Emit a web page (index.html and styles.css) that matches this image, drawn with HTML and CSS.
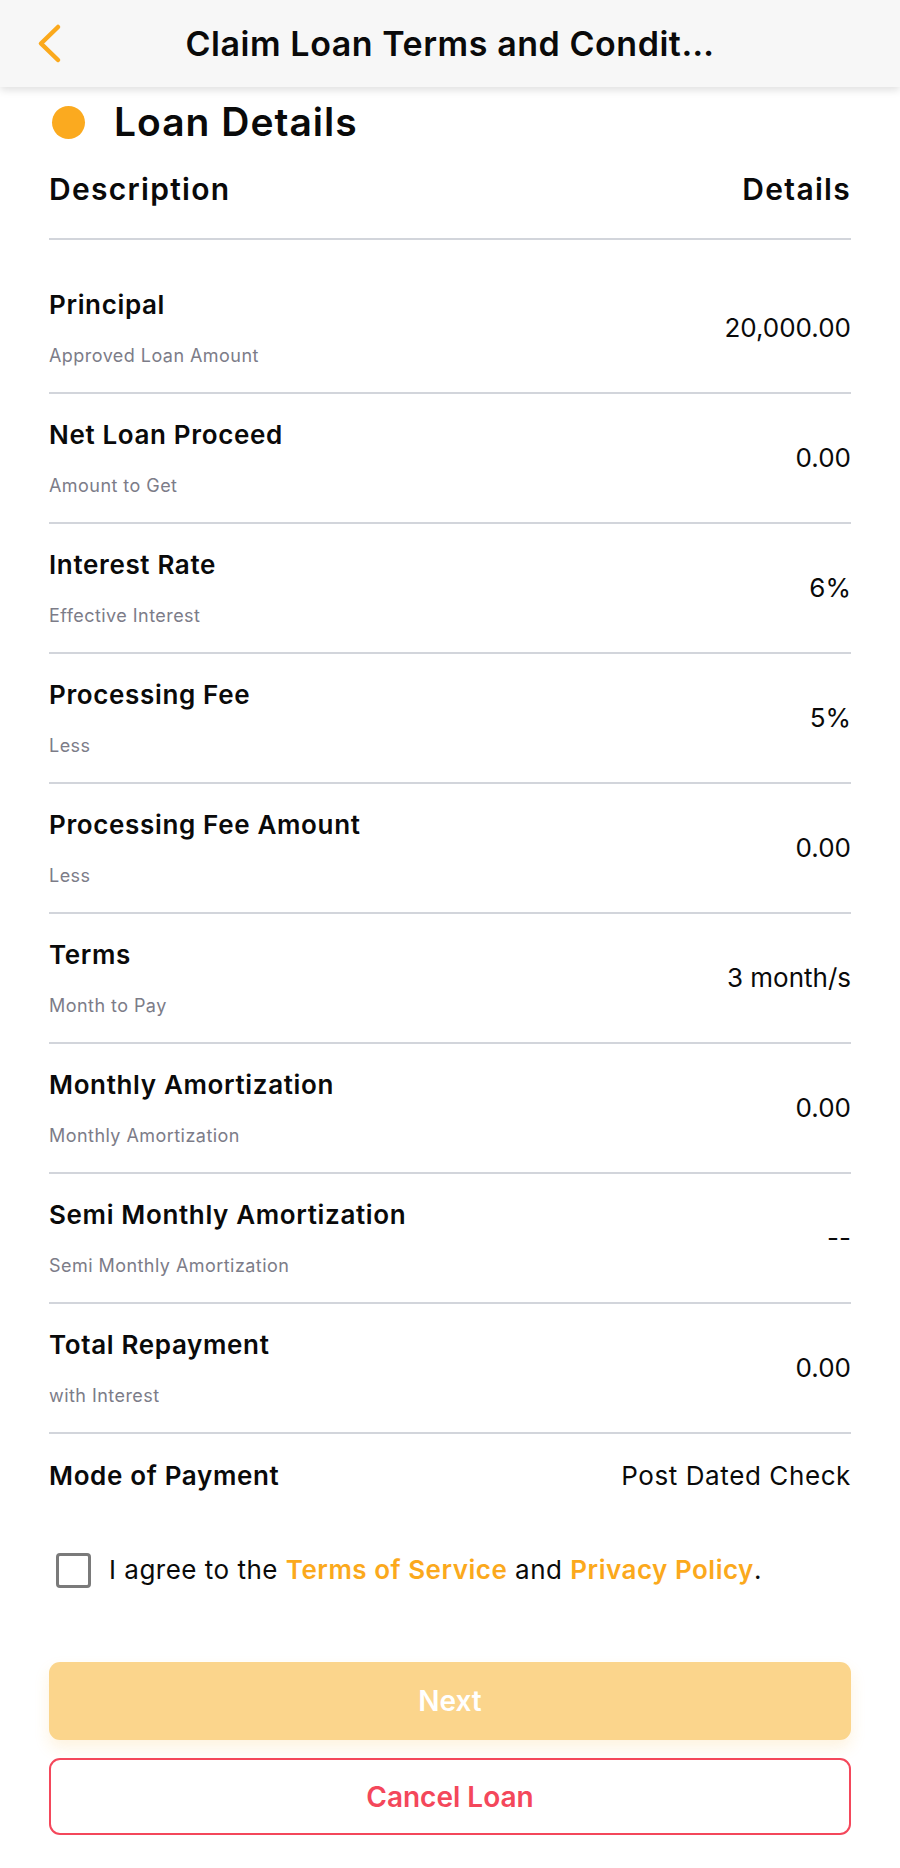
FILE: index.html
```html
<!DOCTYPE html>
<html lang="en">
<head>
<meta charset="utf-8">
<title>Claim Loan Terms and Conditions</title>
<link rel="stylesheet" href="styles.css">
</head>
<body>
<header class="topbar">
  <div class="topbar-left">
    <svg class="back" width="48" height="87" viewBox="0 0 48 87" aria-hidden="true">
      <path d="M38 27 L21 43.5 L38 60" fill="none" stroke="#FBA91C" stroke-width="4.5" stroke-linecap="round" stroke-linejoin="round"/>
    </svg>
  </div>
  <h1 class="topbar-title">Claim Loan Terms and Condit…</h1>
  <div class="topbar-right"></div>
</header>

<main class="content">
  <div class="section-head">
    <span class="dot"></span>
    <h2 class="section-title">Loan Details</h2>
  </div>

  <div class="table-head">
    <span>Description</span>
    <span>Details</span>
  </div>

  <div class="rows">
    <div class="row">
      <div class="label"><div class="label-title">Principal</div><div class="label-sub">Approved Loan Amount</div></div>
      <div class="value">20,000.00</div>
    </div>
    <div class="row">
      <div class="label"><div class="label-title">Net Loan Proceed</div><div class="label-sub">Amount to Get</div></div>
      <div class="value">0.00</div>
    </div>
    <div class="row">
      <div class="label"><div class="label-title">Interest Rate</div><div class="label-sub">Effective Interest</div></div>
      <div class="value">6%</div>
    </div>
    <div class="row">
      <div class="label"><div class="label-title">Processing Fee</div><div class="label-sub">Less</div></div>
      <div class="value">5%</div>
    </div>
    <div class="row">
      <div class="label"><div class="label-title">Processing Fee Amount</div><div class="label-sub">Less</div></div>
      <div class="value">0.00</div>
    </div>
    <div class="row">
      <div class="label"><div class="label-title">Terms</div><div class="label-sub">Month to Pay</div></div>
      <div class="value">3 month/s</div>
    </div>
    <div class="row">
      <div class="label"><div class="label-title">Monthly Amortization</div><div class="label-sub">Monthly Amortization</div></div>
      <div class="value">0.00</div>
    </div>
    <div class="row">
      <div class="label"><div class="label-title">Semi Monthly Amortization</div><div class="label-sub">Semi Monthly Amortization</div></div>
      <div class="value">--</div>
    </div>
    <div class="row">
      <div class="label"><div class="label-title">Total Repayment</div><div class="label-sub">with Interest</div></div>
      <div class="value">0.00</div>
    </div>
  </div>

  <div class="mode-row">
    <span class="label-title">Mode of Payment</span>
    <span class="value value-text">Post Dated Check</span>
  </div>

  <label class="agree">
    <span class="checkbox"></span>
    <span class="agree-text">I agree to the <a class="link">Terms of Service</a> and <a class="link">Privacy Policy</a>.</span>
  </label>

  <div class="actions">
    <button class="btn btn-next" type="button">Next</button>
    <button class="btn btn-cancel" type="button">Cancel Loan</button>
  </div>
</main>
</body>
</html>
```

FILE: styles.css
```css
html, body {
  margin: 0;
  padding: 0;
  background: #ffffff;
}

body {
  width: 900px;
  font-family: "Inter", "Noto Sans", "Liberation Sans", sans-serif;
  color: #0a0a0a;
}

.topbar {
  position: relative;
  z-index: 2;
  height: 87px;
  background: #f7f7f7;
  box-shadow: 0 3px 8px rgba(0, 0, 0, 0.13);
  display: grid;
  grid-template-columns: 1fr auto 1fr;
  align-items: center;
}

.topbar-left {
  height: 87px;
  padding-left: 20px;
}

.back {
  display: block;
}

.topbar-title {
  margin: 0;
  font-size: 34px;
  font-weight: 600;
  line-height: 87px;
  height: 87px;
  color: #0a0a0a;
  white-space: nowrap;
  letter-spacing: 0.55px;
}

.content {
  padding: 0 49px;
}

.section-head {
  display: flex;
  align-items: center;
  gap: 29px;
  margin-top: 11px;
  height: 48px;
  padding-left: 3px;
}

.dot {
  width: 33px;
  height: 33px;
  border-radius: 50%;
  background: #fbaa1f;
  flex: none;
}

.section-title {
  margin: 0;
  font-size: 39px;
  font-weight: 600;
  line-height: 48px;
  letter-spacing: 1px;
}

.table-head {
  display: flex;
  justify-content: space-between;
  margin-top: 23px;
  font-size: 30px;
  font-weight: 600;
  line-height: 40px;
  letter-spacing: 1.3px;
  padding-bottom: 29px;
  border-bottom: 2px solid #d2d5db;
}

.rows {
  margin-top: 24px;
}

.row {
  display: flex;
  justify-content: space-between;
  align-items: center;
  height: 130px;
  box-sizing: border-box;
  border-bottom: 2px solid #d2d5db;
}

.label {
  display: flex;
  flex-direction: column;
  gap: 20px;
}

.label-title {
  font-size: 26px;
  font-weight: 600;
  line-height: 36px;
  letter-spacing: 0.65px;
}

.label-sub {
  font-size: 18px;
  font-weight: 400;
  line-height: 26px;
  color: #7c7c88;
  letter-spacing: 0.45px;
}

.value {
  font-size: 26px;
  font-weight: 400;
  line-height: 36px;
  color: #0a0a0a;
}

.value-text {
  letter-spacing: 0.6px;
}

.mode-row {
  display: flex;
  justify-content: space-between;
  padding-top: 24px;
}

.agree {
  display: flex;
  align-items: center;
  gap: 18px;
  margin-top: 58px;
  padding-left: 7px;
  height: 36px;
}

.checkbox {
  width: 35px;
  height: 35px;
  box-sizing: border-box;
  border: 3.5px solid #7a7a7a;
  border-radius: 4px;
  flex: none;
}

.agree-text {
  font-size: 26px;
  line-height: 36px;
  font-weight: 400;
  letter-spacing: 0.5px;
}

.link {
  color: #fba91c;
  font-weight: 600;
  text-decoration: none;
}

.actions {
  display: flex;
  flex-direction: column;
  gap: 18px;
  margin-top: 74px;
}

.btn {
  display: block;
  width: 100%;
  font-family: inherit;
  font-size: 28px;
  font-weight: 600;
  border-radius: 11px;
  cursor: pointer;
}

.btn-next {
  height: 78px;
  border: none;
  background: #fbd58c;
  color: #ffffff;
  box-shadow: 0 8px 16px rgba(251, 170, 31, 0.14);
}

.btn-cancel {
  height: 77px;
  background: #ffffff;
  border: 2.5px solid #f4475b;
  color: #f4475b;
}
```
